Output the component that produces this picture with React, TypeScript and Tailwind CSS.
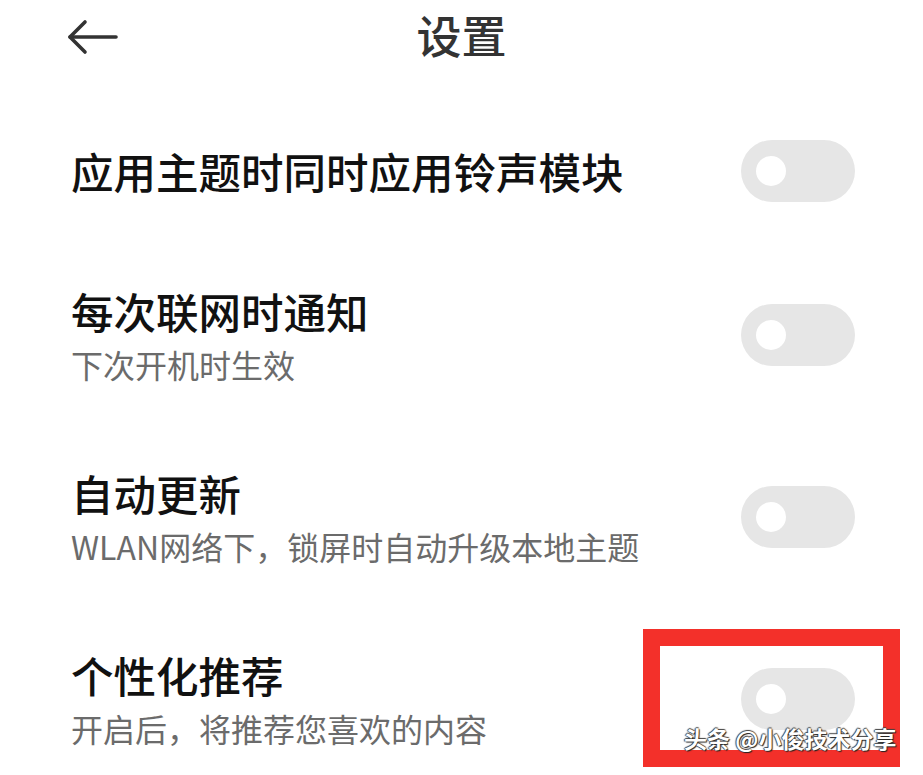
import React from "react";

const font = { fontFamily: '"Noto Sans CJK SC", "Noto Sans", sans-serif' };

function Toggle() {
  return (
    <div className="relative flex h-[62px] w-[114px] shrink-0 items-center rounded-full bg-[#e6e6e6]">
      <div className="ml-[15px] h-[30px] w-[30px] rounded-full bg-white" />
    </div>
  );
}

function Row({ title, sub }: { title: string; sub?: string }) {
  return (
    <div className="flex items-center justify-between pl-[71px] pr-[68px]">
      <div className="flex flex-col">
        <div className="text-[42.5px] leading-[50px] font-medium text-[#111]">{title}</div>
        {sub && (
          <div className="mt-[8px] text-[32px] leading-[40px] text-[#6b6b6b]">{sub}</div>
        )}
      </div>
      <Toggle />
    </div>
  );
}

export default function App() {
  return (
    <div className="relative h-[775px] w-[923px] overflow-hidden bg-white" style={font}>
      <div className="relative flex h-[70px] items-center justify-center">
        <svg
          className="absolute left-[66px] top-[19px]"
          width="54"
          height="37"
          viewBox="0 0 54 37"
          fill="none"
          stroke="#333"
          strokeWidth="3.6"
          strokeLinecap="round"
          strokeLinejoin="round"
        >
          <path d="M4 18 H50" />
          <path d="M19 3 L4 18 L19 33" />
        </svg>
        <div className="text-[45px] leading-[50px] font-medium text-[#333]">设置</div>
      </div>
      <div className="flex flex-col gap-[84px] pt-[70px]">
        <Row title="应用主题时同时应用铃声模块" />
        <Row title="每次联网时通知" sub="下次开机时生效" />
        <Row title="自动更新" sub="WLAN网络下，锁屏时自动升级本地主题" />
        <Row title="个性化推荐" sub="开启后，将推荐您喜欢的内容" />
      </div>
      <div className="absolute left-[643px] top-[629px] h-[138px] w-[257px] border-[17px] border-[#f3302a]" />
      <div
        className="absolute left-[684px] top-[724px] text-[23px] leading-[28px] font-bold text-white"
        style={{ textShadow: "1px 1px 1px #222, -1px 0 1px #444, 0 -1px 1px #444" }}
      >
        头条 @小俊技术分享
      </div>
    </div>
  );
}
